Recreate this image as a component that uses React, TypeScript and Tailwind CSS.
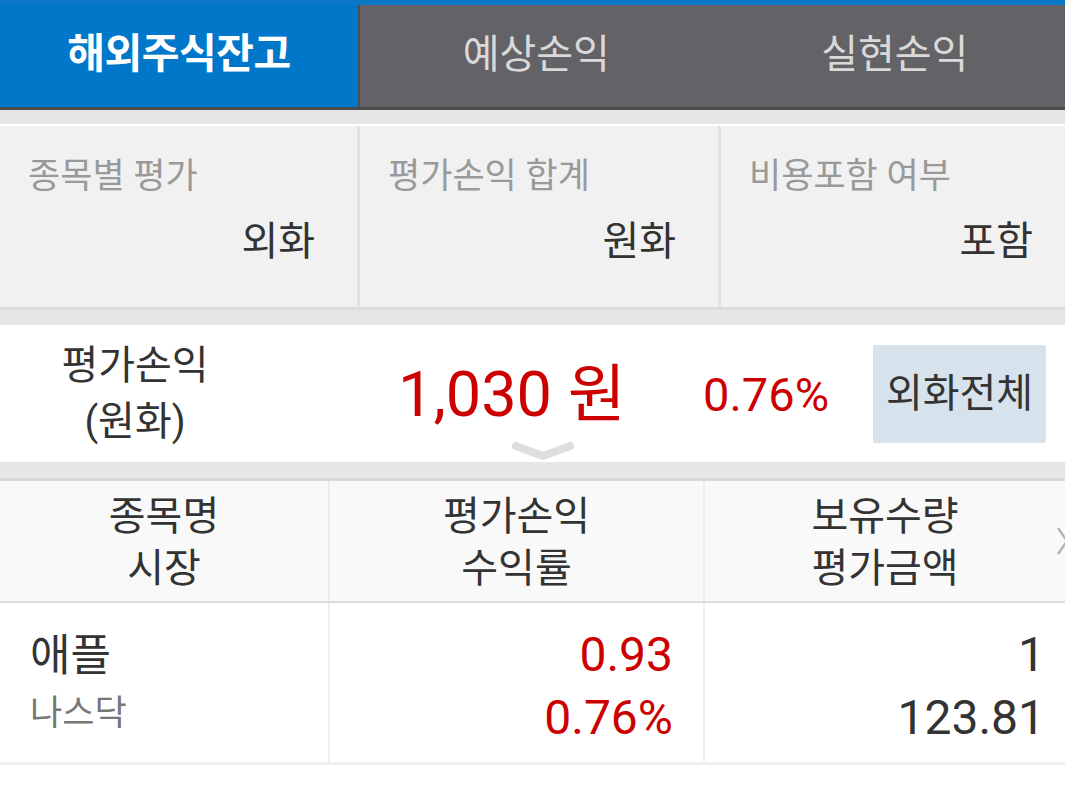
import React from "react";

const font = { fontFamily: "Roboto, 'Noto Sans CJK KR', sans-serif" };

export default function App() {
  return (
    <div className="w-[1065px] h-[799px] bg-white overflow-hidden" style={font}>
      {/* top strip */}
      <div className="h-[5px] bg-[#0a78c6]" />
      {/* tabs */}
      <div className="flex h-[102px]">
        <div className="w-[358px] bg-[#0077c9] flex items-center justify-center text-white text-[41px] font-bold tracking-[-0.5px] pb-[2px]">
          해외주식잔고
        </div>
        <div className="w-[2px] bg-[#4f4f53]" />
        <div className="flex-1 bg-[#636266] flex items-center justify-center text-[#d9d9d9] text-[40px] pb-[2px] pl-[6px]">
          예상손익
        </div>
        <div className="flex-1 bg-[#636266] flex items-center justify-center text-[#d9d9d9] text-[40px] pb-[2px] pl-[18px]">
          실현손익
        </div>
      </div>
      <div className="h-[3px] bg-[#4c4c4c]" />
      <div className="h-[14px] bg-[#e6e6e6]" />
      <div className="h-[2px] bg-white" />
      {/* settings */}
      <div className="flex h-[184px] bg-[#f1f1f1] border-b-[3px] border-[#dcdcdc]">
        {[
          ["종목별 평가", "외화", "w-[357px]", "pr-[42px]"],
          ["평가손익 합계", "원화", "w-[358px]", "pr-[42px]"],
          ["비용포함 여부", "포함", "flex-1", "pr-[32px]"],
        ].map(([label, value, w, pr], i) => (
          <React.Fragment key={i}>
            {i > 0 && <div className="w-[3px] bg-[#e3e3e3]" />}
            <div className={`${w} flex flex-col pl-[28px] ${pr}`}>
              <div className="mt-[29px] text-[35px] text-[#999999] leading-[44px]">{label}</div>
              <div className="mt-[18px] text-[40px] text-[#333333] leading-[50px] text-right">{value}</div>
            </div>
          </React.Fragment>
        ))}
      </div>
      <div className="h-[15px] bg-[#e6e6e6]" />
      {/* summary */}
      <div className="relative h-[137px] bg-white flex items-center">
        <div className="w-[270px] flex flex-col items-center text-[40px] text-[#333333] leading-[56px]">
          <div>평가손익</div>
          <div>(원화)</div>
        </div>
        <div className="ml-[128px] w-[305px] text-[#cc0000] text-[63px] leading-none mt-[2px] whitespace-nowrap">1,030 원</div>
        <div className="text-[#cc0000] text-[47px] leading-none mt-[2px]">0.76%</div>
        <div className="ml-auto mr-[19px] w-[173px] h-[98px] bg-[#d6e3ec] rounded-[2px] flex items-center justify-center text-[40px] text-[#333333]">
          외화전체
        </div>
        <svg className="absolute left-[512px] top-[116px]" width="62" height="22" viewBox="0 0 62 22">
          <path d="M4 5 L31 15 L58 5" fill="none" stroke="#dedede" strokeWidth="8" strokeLinecap="round" strokeLinejoin="round" />
        </svg>
      </div>
      <div className="h-[16px] bg-[#e6e6e6]" />
      <div className="h-[3px] bg-[#d8d8d8]" />
      {/* header row */}
      <div className="relative flex h-[122px] bg-[#f9f9f9] border-b-[2px] border-[#dcdcdc] text-[40px] text-[#333333] leading-[52px]">
        <div className="w-[328px] flex flex-col items-center justify-center pt-[4px]">
          <div>종목명</div>
          <div>시장</div>
        </div>
        <div className="w-[2px] bg-[#ececec]" />
        <div className="w-[373px] flex flex-col items-center justify-center pt-[4px]">
          <div>평가손익</div>
          <div>수익률</div>
        </div>
        <div className="w-[2px] bg-[#ececec]" />
        <div className="flex-1 flex flex-col items-center justify-center pt-[4px]">
          <div>보유수량</div>
          <div>평가금액</div>
        </div>
        <svg className="absolute left-[1057px] top-[45px]" width="12" height="30" viewBox="0 0 12 30">
          <path d="M1 2 L10 15 L1 28" fill="none" stroke="#b5b5b5" strokeWidth="2.5" />
        </svg>
      </div>
      {/* data row */}
      <div className="flex h-[162px] bg-white border-b-[3px] border-[#efefef]">
        <div className="w-[328px] flex flex-col justify-center pl-[30px] pt-[4px]">
          <div className="text-[44px] text-[#333333] leading-[58px]">애플</div>
          <div className="text-[35px] text-[#777777] leading-[58px]">나스닥</div>
        </div>
        <div className="w-[2px] bg-[#efefef]" />
        <div className="w-[373px] flex flex-col justify-center items-end pr-[30px] text-[#cc0000] text-[48px] leading-[63px] pt-[6px]">
          <div>0.93</div>
          <div>0.76%</div>
        </div>
        <div className="w-[2px] bg-[#efefef]" />
        <div className="flex-1 flex flex-col justify-center items-end pr-[20px] text-[#333333] text-[48px] leading-[63px] pt-[6px]">
          <div>1</div>
          <div>123.81</div>
        </div>
      </div>
    </div>
  );
}
